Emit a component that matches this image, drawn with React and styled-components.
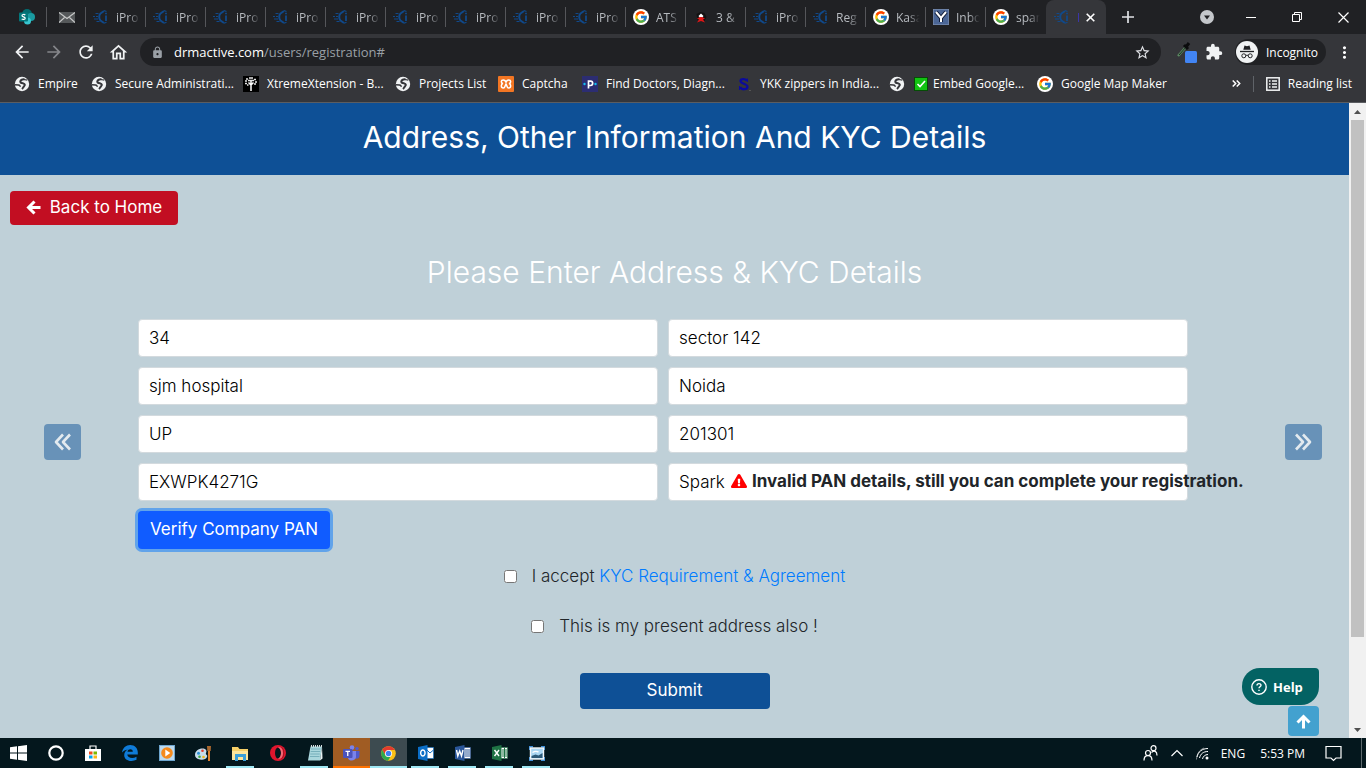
import React from "react";
import styled, { createGlobalStyle } from "styled-components";
import {
  MdArrowBack,
  MdArrowForward,
  MdRefresh,
  MdOutlineHome,
  MdLock,
  MdStarBorder,
  MdExtension,
  MdMoreVert,
} from "react-icons/md";
import { FcGoogle } from "react-icons/fc";
import { FaExclamationTriangle } from "react-icons/fa";

const GlobalStyle = createGlobalStyle`
  *, *::before, *::after { box-sizing: border-box; }
  body { margin: 0; background: #bfd0d8; font-family: Inter, sans-serif; color: #212529; }
  button, input { font: inherit; }
  button { border: 0; padding: 0; background: none; color: inherit; }
  svg { display: block; flex: none; }
`;

const chromeFont = `"Open Sans", "Noto Sans", sans-serif`;

const Screen = styled.div`
  display: flex;
  flex-direction: column;
  min-height: 100vh;
  overflow: hidden;
`;

/* ---------- Browser ---------- */

const Browser = styled.header`
  background: #35363a;
  color: #fff;
  font-family: ${chromeFont};
  font-size: 12px;
  border-bottom: 1px solid #5b5d61;
`;

const TabStrip = styled.div`
  display: flex;
  height: 34px;
  background: #202124;
`;

const PinnedTab = styled.button`
  display: flex;
  align-items: center;
  justify-content: center;
  width: ${(p) => p.$width}px;
  height: 34px;
  padding-left: ${(p) => p.$inset || 0}px;
  flex: none;
  background: linear-gradient(#55565a, #55565a) right center / 1px 20px no-repeat;
`;

const Tab = styled.button`
  display: flex;
  align-items: center;
  gap: 7px;
  flex: 0 1 60px;
  min-width: 0;
  height: 34px;
  padding: 0 2px 0 7px;
  overflow: hidden;
  background: ${(p) =>
    p.$last ? "none" : "linear-gradient(#55565a, #55565a) right center / 1px 20px no-repeat"};
`;

const ActiveTab = styled(Tab)`
  background: #35363a;
  border-radius: 8px 8px 0 0;
  padding: 0 11px 0 8px;
  justify-content: space-between;
`;

const TabTitle = styled.span`
  flex: 1;
  min-width: 0;
  overflow: hidden;
  white-space: nowrap;
  text-align: left;
  color: #b6babf;
  mask-image: linear-gradient(90deg, #000 45%, transparent 85%);
`;

const ActiveTitle = styled.span`
  width: 1px;
  height: 9px;
  background: #3b35a8;
`;

const NewTab = styled.button`
  width: 44px;
  height: 34px;
  display: grid;
  place-items: center;
`;

const WindowControls = styled.div`
  margin-left: auto;
  display: flex;
  align-items: center;
`;

const WindowButton = styled.button`
  width: ${(p) => p.$width || 46}px;
  height: 30px;
  display: grid;
  place-items: center;
`;

const Toolbar = styled.div`
  display: flex;
  align-items: center;
  height: 36px;
  padding: 0 12px;
`;

const ToolButton = styled.button`
  width: 32px;
  height: 32px;
  margin-left: ${(p) => (p.$first ? -6 : 0)}px;
  display: grid;
  place-items: center;
  color: ${(p) => (p.$dim ? "#85868a" : "#f1f3f4")};
`;

const AddressBar = styled.div`
  flex: 1;
  display: flex;
  align-items: center;
  gap: 10px;
  height: 28px;
  margin-left: 6px;
  padding: 0 10px 0 11px;
  border-radius: 14px;
  background: #202124;
  color: #9aa0a6;
`;

const Url = styled.span`
  flex: 1;
  white-space: nowrap;
  font-size: 13px;
  b { font-weight: 400; color: #fff; }
`;

const Extensions = styled.div`
  display: flex;
  align-items: center;
  gap: 8px;
  margin-left: 16px;
`;

const Incognito = styled.button`
  display: flex;
  align-items: center;
  gap: 8px;
  height: 26px;
  margin-left: 4px;
  padding: 0 8px 0 1px;
  border-radius: 13px;
  background: #202124;
  color: #fff;
`;

const MenuButton = styled.button`
  width: 20px;
  display: grid;
  place-items: center;
`;

const Bookmarks = styled.nav`
  display: flex;
  align-items: center;
  height: 32px;
  padding: 0 14px 5px;
`;

const Bookmark = styled.a`
  display: flex;
  align-items: center;
  gap: ${(p) => p.$gap || 8}px;
  flex: 0 0 ${(p) => p.$width}px;
  white-space: nowrap;
  color: #fff;
  text-decoration: none;
`;

const BookmarkEnd = styled.div`
  display: flex;
  align-items: center;
  gap: 12px;
  margin-left: auto;
`;

const Divider = styled.span`
  width: 1px;
  height: 16px;
  background: #5f6368;
`;

const ReadingList = styled.button`
  display: flex;
  align-items: center;
  gap: 8px;
  white-space: nowrap;
`;

const GoogleDisc = styled.span`
  display: grid;
  place-items: center;
  flex: none;
  width: 16px;
  height: 16px;
  border-radius: 50%;
  background: #fff;
`;

/* ---------- Page ---------- */

const Viewport = styled.div`
  flex: 1;
  display: flex;
`;

const Page = styled.main`
  position: relative;
  flex: 1;
  min-width: 0;
  background: #bfd0d8;
`;

const Banner = styled.h1`
  margin: 0;
  height: 72px;
  padding-bottom: 4px;
  display: flex;
  align-items: center;
  justify-content: center;
  background: #0e5096;
  color: #fff;
  font-size: 30px;
  font-weight: 400;
`;

const PageButton = styled.button`
  display: flex;
  align-items: center;
  justify-content: center;
  gap: 9px;
  padding-bottom: 2px;
  border-radius: 4px;
  color: #fff;
  font-size: 17px;
`;

const BackButton = styled(PageButton)`
  width: 168px;
  height: 34px;
  margin: 16px 10px 0;
  background: #c20e22;
`;

const Subtitle = styled.h2`
  margin: 29px 0;
  color: #fff;
  text-align: center;
  font-size: 30px;
  line-height: 36px;
  font-weight: 300;
`;

const Wizard = styled.div`
  display: flex;
  align-items: center;
  padding: 0 27px 0 44px;
`;

const StepButton = styled.button`
  display: grid;
  place-items: center;
  width: 37px;
  height: 36px;
  border-radius: 4px;
  background: #6892b8;
  color: #e3eaef;
`;

const Form = styled.form`
  flex: 1;
  display: grid;
  grid-template-columns: 1fr 1fr;
  gap: 10px;
  margin: 0 97px 0 57px;
  padding-bottom: 16px;
`;

const Field = styled.div`
  position: relative;
`;

const TextInput = styled.input`
  display: block;
  width: 100%;
  height: 38px;
  padding: 0 10px;
  border: 1px solid #d3dade;
  border-radius: 4px;
  background: #fff;
  color: #000;
  font-size: 17px;
  font-weight: 300;
`;

const PanError = styled.strong`
  position: absolute;
  left: 63px;
  top: 8px;
  display: flex;
  align-items: center;
  gap: 5px;
  white-space: nowrap;
  font-size: 17px;
  line-height: 20px;
  font-weight: 700;
  color: #212529;
  svg { color: #f00; }
`;

const VerifyButton = styled(PageButton)`
  justify-self: start;
  width: 192px;
  height: 38px;
  background: #105cff;
  box-shadow: 0 0 0 3px #61a3ea;
`;

const Consents = styled.div`
  margin-top: -14px;
`;

const Consent = styled.label`
  display: flex;
  align-items: center;
  justify-content: center;
  gap: 15px;
  height: 50px;
  font-size: 17px;
  font-weight: 300;
  a { color: #007bff; text-decoration: none; }
`;

const Checkbox = styled.input`
  width: 13px;
  height: 13px;
  margin: 0;
`;

const SubmitButton = styled(PageButton)`
  width: 190px;
  height: 36px;
  margin: 22px auto 28px;
  background: #0e5096;
`;

const FloatingTools = styled.div`
  position: absolute;
  right: 30px;
  bottom: 2px;
  display: flex;
  flex-direction: column;
  align-items: flex-end;
  gap: 1px;
`;

const HelpButton = styled.button`
  display: flex;
  align-items: center;
  gap: 6px;
  width: 77px;
  height: 37px;
  padding-left: 9px;
  border-radius: 18px 4px 18px 18px;
  background: #036263;
  color: #fff;
  font-family: ${chromeFont};
  font-size: 13px;
  font-weight: 700;
`;

const TopButton = styled.button`
  display: grid;
  place-items: center;
  width: 31px;
  height: 30px;
  border-radius: 4px;
  background: #43a1cf;
  color: #fff;
`;

const ScrollBar = styled.div`
  display: flex;
  flex-direction: column;
  width: 17px;
  background: #f1f1f1;
`;

const ScrollArrow = styled.span`
  height: 17px;
  display: grid;
  place-items: center;
  color: #505050;
`;

const ScrollTrack = styled.div`
  flex: 1;
  display: flex;
  flex-direction: column;
  padding: 0 2px;
  &::before { content: ""; flex: 517; background: #c1c1c1; }
  &::after { content: ""; flex: 84; }
`;

/* ---------- Taskbar ---------- */

const Taskbar = styled.footer`
  display: flex;
  height: 30px;
  background: #04171d;
  color: #fff;
  font-family: ${chromeFont};
  font-size: 12px;
`;

const taskBackground = { alert: "#a05c23", active: "#3d4b50" };

const taskUnderline = {
  open: "linear-gradient(90deg, transparent 4px, #9fe8f4 4px 32px, transparent 32px) 0 0 2 0",
  alert: "linear-gradient(#ff7200, #ff7200) 0 0 2 0",
  active: "linear-gradient(#9fe8f4, #9fe8f4) 0 0 2 0",
};

const TaskButton = styled.button`
  display: grid;
  place-items: center;
  width: 37px;
  height: 30px;
  background: ${(p) => taskBackground[p.$state] || "none"};
  border-top: 2px solid transparent;
  border-bottom: 2px solid transparent;
  border-image: ${(p) => taskUnderline[p.$state] || "none"};
`;

const Tray = styled.div`
  display: flex;
  align-items: center;
  gap: 12px;
  margin-left: auto;
  white-space: nowrap;
`;

const TrayEdge = styled.span`
  width: 1px;
  height: 30px;
  margin-right: 4px;
  margin-left: 7px;
  background: #5d696d;
`;

const Clock = styled.time`
  margin: 0 8px 0 3px;
`;

/* ---------- Drawings ---------- */

const SiteIcon = () => (
  <svg width="16" height="16" viewBox="0 0 16 16" fill="none" stroke="#10498a">
    <path d="M11 2L7.500 4.500C5.800 6 5.800 10 7.500 11.500L11 14" strokeWidth="2" />
    <path d="M11 1.500l2.500 1M11 14.200l2.500-1" strokeWidth="1.200" />
    <path d="M13 6.500V12M13 3.800v1.500" strokeWidth="1.800" />
    <path d="M2.500 4.500h3M0 7.500h2M3 7.500h2M1 10h4M3.500 12.500h3" strokeWidth="1.200" />
  </svg>
);

const SharepointIcon = () => (
  <svg width="16" height="16" viewBox="0 0 16 16">
    <circle cx="8" cy="5" r="5" fill="#036c70" />
    <circle cx="12" cy="8" r="4" fill="#1a9ba1" />
    <circle cx="8.500" cy="12" r="3.500" fill="#37c6d0" />
    <rect x="0" y="3.500" width="9" height="9" rx="1" fill="#03787c" />
    <path d="M6.300 6C5.500 5.200 3 5.200 3 6.700c0 1.400 3.200 1 3.200 2.500C6.200 10.700 3.500 10.600 2.700 9.800" fill="none" stroke="#fff" strokeWidth="1.200" />
  </svg>
);

const MailIcon = () => (
  <svg width="16" height="11" viewBox="0 0 16 11">
    <rect width="16" height="11" fill="#55585a" />
    <path d="M0 .5l8 6 8-6M0 10.500l5.500-5M16 10.500l-5.500-5" fill="none" stroke="#c9caca" strokeWidth="1.100" />
  </svg>
);

const RedFigureIcon = () => (
  <svg width="16" height="16" viewBox="0 0 16 16">
    <path d="M3.500 5l4-2 4 1 2 4-2 4-7-1z" fill="#111" />
    <path d="M8 4.500l2.500 2.500L9 9H7L5.500 7z" fill="#fff" />
    <path d="M4 9.500l3-1.500h2l3 1.500-2 1 2 3-4-1.500-4 1.500 2-3z" fill="#e01616" />
  </svg>
);

const YIcon = () => (
  <svg width="16" height="16" viewBox="0 0 16 16">
    <rect width="16" height="16" rx="1" fill="#4b6696" stroke="#8b9bb8" />
    <path d="M3 3l5 6 5-6M8 8.500V13" fill="none" stroke="#111c38" strokeWidth="4" />
    <path d="M3 3l5 6 5-6M8 8.500V13" fill="none" stroke="#fff" strokeWidth="2" />
  </svg>
);

const GIcon = () => (
  <GoogleDisc>
    <FcGoogle size={14} />
  </GoogleDisc>
);

const GlobeIcon = () => (
  <svg width="16" height="16" viewBox="0 0 16 16">
    <circle cx="8" cy="8" r="7.200" fill="#f1f3f4" />
    <path d="M10.500 3.500C8.500 3 6.500 4 6.300 5.500c-.1 1.600 1.500 1.700 3 1.900 1.700.3 1.900 1.800.9 2.700-.8.800-1 1.700-2.200 2.900" fill="none" stroke="#35363a" strokeWidth="2" />
    <path d="M1 8.800l3.500.2c1.200.2 1.800 1 1.500 1.800" fill="none" stroke="#35363a" strokeWidth="1.600" />
    <path d="M10 3.500l3.300.7" fill="none" stroke="#35363a" strokeWidth="1.200" />
  </svg>
);

const TreeIcon = () => (
  <svg width="16" height="16" viewBox="0 0 16 16">
    <rect width="16" height="16" fill="#000" />
    <path d="M8 15V9L5.500 6.500M8 9l2.500-2.500M8 8V4" fill="none" stroke="#fff" strokeWidth="1.500" />
    <path d="M2 5h2M3 3h2M6 2h4M11 3.500h2M12 6h2M2 7.500h2M5 4.500h6M11 8h2M4 9h1.500" stroke="#e6e6e6" strokeWidth="1.300" />
  </svg>
);

const XamppIcon = () => (
  <svg width="16" height="16" viewBox="0 0 16 16">
    <rect width="16" height="16" rx="1" fill="#f37623" />
    <path d="M8 6.500C7.500 4.500 6.500 4 5.300 4 2.800 4 2.700 7 5 7.600 2.700 8 2.800 12 5.300 12 7.300 12 6.800 9.500 8 8c1.200 1.500.7 4 2.700 4 2.500 0 2.600-4 .3-4.400C13.300 7 13.200 4 10.700 4 9.500 4 8.500 4.500 8 6.500z" fill="none" stroke="#fff" strokeWidth="1.500" />
  </svg>
);

const PractoIcon = () => (
  <svg width="16" height="16" viewBox="0 0 16 16">
    <rect width="16" height="16" fill="#2c2d72" />
    <path d="M6.500 12.500V5.200h2a2 2 0 0 1 0 4.300h-2" fill="none" stroke="#fff" strokeWidth="1.700" />
    <circle cx="2.500" cy="8" r="1.200" fill="#14bef0" />
    <circle cx="13.500" cy="8" r="1.200" fill="#14bef0" />
  </svg>
);

const NavySIcon = () => (
  <svg width="16" height="16" viewBox="0 0 16 16" fill="none" stroke="#0b0b9c">
    <path d="M11 5C10 2.500 4.500 2.500 4.500 5c0 2.700 7 2.800 7 5.800 0 3.200-6 3.200-7.300.2" strokeWidth="2.300" />
    <path d="M11.500 2.500v3.500M3.500 14v-4" strokeWidth="1" />
    <path d="M13 14.500h2" stroke="#555" strokeWidth="1" />
  </svg>
);

const CheckIcon = () => (
  <svg width="14" height="14" viewBox="0 0 14 14">
    <rect x=".5" y=".5" width="13" height="13" fill="#12c312" stroke="#064d06" />
    <path d="M3.500 7l2.500 2.500L11 4" fill="none" stroke="#fff" strokeWidth="1.600" />
  </svg>
);

const IncognitoIcon = () => (
  <svg width="22" height="22" viewBox="0 0 22 22">
    <circle cx="11" cy="11" r="11" fill="#f1f3f4" />
    <path d="M7.300 8.700l1.200-4.200 2.500.7 2.500-.7 1.200 4.200z" fill="#202124" />
    <path d="M4 10.500h14" stroke="#202124" strokeWidth="1.300" />
    <g fill="none" stroke="#202124" strokeWidth="1">
      <circle cx="7.800" cy="14.800" r="2" />
      <circle cx="14.200" cy="14.800" r="2" />
      <path d="M9.800 14.500q1.200-.8 2.400 0" />
    </g>
  </svg>
);

const PickerIcon = () => (
  <svg width="20" height="22" viewBox="0 0 20 22">
    <path d="M1 15l8-9" stroke="#5b8a62" strokeWidth="2.400" />
    <path d="M2 14l7-8" stroke="#1b2b20" strokeWidth="1" />
    <path d="M7 4l4 4M9 6l3-4" stroke="#0b0c0d" strokeWidth="3" />
    <rect x="8" y="10" width="12" height="12" rx="1.500" fill="#4285f4" />
  </svg>
);

const ListIcon = () => (
  <svg width="14" height="14" viewBox="0 0 14 14" fill="none" stroke="#f1f3f4">
    <rect x=".8" y=".8" width="12.400" height="12.400" strokeWidth="1.500" />
    <path d="M3 4h1.500M6 4h5M3 7h1.500M6 7h5M3 10h1.500M6 10h5" strokeWidth="1.500" />
  </svg>
);

const HeavyArrow = ({ up }) => (
  <svg width="15" height="15" viewBox="0 0 15 15" fill="none" stroke="currentColor" strokeWidth="3">
    <path d={up ? "M1.500 8.500l6-6 6 6M7.500 3v11.500" : "M8.500 1.500l-6 6 6 6M3 7.500h11.500"} />
  </svg>
);

const DoubleChevron = ({ right }) => (
  <svg width="19" height="18" viewBox="0 0 19 18" fill="none" stroke="currentColor" strokeWidth="2.600" strokeLinejoin="round">
    <path d={right ? "M2 1.500L9 9l-7 7.500M9 1.500L16 9l-7 7.500" : "M10 1.500L3 9l7 7.500M17 1.500L10 9l7 7.500"} />
  </svg>
);

const HelpIcon = () => (
  <svg width="16" height="16" viewBox="0 0 16 16" fill="none" stroke="#fff" strokeWidth="1.400">
    <circle cx="8" cy="8" r="7.200" />
    <path d="M6 6.500C6 4 10 4 10 6.300c0 1.500-2 1.500-2 3" />
    <path d="M8 10.800v1.300" />
  </svg>
);

const Triangle = ({ down }) => (
  <svg width="7" height="4" viewBox="0 0 7 4" fill="currentColor">
    <path d={down ? "M0 0h7L3.500 4z" : "M0 4h7L3.500 0z"} />
  </svg>
);

const OfficeIcon = ({ color, mark, children }) => (
  <svg width="16" height="16" viewBox="0 0 16 16">
    <rect x="8" y="2.500" width="7.500" height="11" fill="#fff" stroke={color} strokeWidth=".6" />
    {children}
    <path d="M0 2l9.500-2v16L0 14z" fill={color} />
    <path d={mark} fill="none" stroke="#fff" strokeWidth="1.400" />
  </svg>
);

const taskIcons = {
  Start: (
    <svg width="17" height="16" viewBox="0 0 17 16" fill="#fff">
      <path d="M0 2.300l7-1v6.200H0zM8 1.200L17 0v7.500H8zM0 8.500h7v6.200l-7-1zM8 8.500h9V16l-9-1.200z" />
    </svg>
  ),
  Search: (
    <svg width="16" height="16" viewBox="0 0 16 16">
      <circle cx="8" cy="8" r="6.700" fill="none" stroke="#fff" strokeWidth="2.200" />
    </svg>
  ),
  Store: (
    <svg width="16" height="16" viewBox="0 0 16 16">
      <path d="M5 4V1h6v3" fill="none" stroke="#fff" strokeWidth="1.200" />
      <path d="M0 4h16v12H0z" fill="#fff" />
      <path d="M4 6.500h3.500v3H4z" fill="#f04e1f" />
      <path d="M8.500 6.500H12v3H8.500z" fill="#7cb900" />
      <path d="M4 10.500h3.500v3H4z" fill="#00a3ee" />
      <path d="M8.500 10.500H12v3H8.500z" fill="#fcb714" />
    </svg>
  ),
  Edge: (
    <svg width="16" height="16" viewBox="0 0 16 16">
      <path d="M0 7.500C.5 3 4 0 8.200 0 13 0 15.800 3.500 15.800 7.500v2H5.300c.2 3.500 5.200 4.500 9.200 2.300v3C9.500 17.300 2.200 16 2.200 10c0-2.500 1.500-4.500 3.500-5.500C3.500 5 1.300 5.800 0 7.500zm5.500-.8h5.300C10.800 3.500 6 3.500 5.500 6.700z" fill="#0f7bd8" />
    </svg>
  ),
  "Media player": (
    <svg width="16" height="16" viewBox="0 0 16 16">
      <rect x=".5" y=".5" width="15" height="15" fill="#bcd9ee" stroke="#6ea6cf" />
      <circle cx="8" cy="8" r="5.800" fill="#f58a1c" />
      <path d="M6.300 4.500v7l5-3.500z" fill="#fff" />
    </svg>
  ),
  Paint: (
    <svg width="17" height="16" viewBox="0 0 17 16">
      <path d="M0 10c0-4 3.500-6.500 7.500-6.500s4.500 2.500 3.500 4.500 2 1.500 1 4-4 3-7 2.500-5-2-5-4.500z" fill="#c7dcea" />
      <circle cx="3.500" cy="8.300" r="1.500" fill="#2c8fd6" />
      <circle cx="7.500" cy="5.800" r="1.300" fill="#e23c2e" />
      <circle cx="4.500" cy="11.800" r="1.300" fill="#3da845" />
      <circle cx="8.500" cy="12" r="1.300" fill="#f1b61b" />
      <path d="M14 16V6" stroke="#e0802c" strokeWidth="2" />
      <path d="M12.300 6L12 1h4l-.3 5z" fill="#a8672f" />
    </svg>
  ),
  "File Explorer": (
    <svg width="17" height="15" viewBox="0 0 17 15">
      <path d="M0 1h6l1.500 2H16v11H0z" fill="#f6d068" />
      <path d="M0 5h16v9H0z" fill="#fde59b" />
      <path d="M3 8h11v7h-3v-4H6v4H3z" fill="#3b9fd8" />
    </svg>
  ),
  Opera: (
    <svg width="16" height="16" viewBox="0 0 16 16">
      <circle cx="8" cy="8" r="8" fill="#e0152d" />
      <path d="M9 .5A8 8 0 0 1 9 15.500c6-2 6-13 0-15z" fill="#8f0f1e" />
      <ellipse cx="8" cy="8" rx="3" ry="5.500" fill="#04171d" />
      <path d="M8 2.500C10 1.500 13 3 13 8s-3 6.500-5 5.500c4-1 4-10 0-11z" fill="#f26a75" />
    </svg>
  ),
  Notepad: (
    <svg width="16" height="16" viewBox="0 0 16 16">
      <path d="M3.500 1.500H15L13 15.500H1z" fill="#a9d6dc" />
      <path d="M15 1.500l.5 12-2.500 2z" fill="#e9f3f4" />
      <path d="M4 4h9.500M3.700 6.500h9.500M3.300 9h9.500M3 11.500h9.500" stroke="#6ba6b3" strokeWidth=".8" />
      <path d="M4 1h11" stroke="#d6dddf" strokeWidth="2" strokeDasharray="1 1" />
    </svg>
  ),
  Teams: (
    <svg width="17" height="16" viewBox="0 0 17 16">
      <circle cx="9" cy="2.600" r="2.300" fill="#7b83eb" />
      <circle cx="14" cy="3.600" r="1.700" fill="#5059c9" />
      <path d="M11 6h5.500v5c0 2-2 3-4 2.500z" fill="#5059c9" />
      <path d="M5 6h8v6c0 4-7 5-8 1z" fill="#7b83eb" />
      <rect x="0" y="4" width="9.500" height="9" rx="1" fill="#4b53bc" />
      <path d="M2.500 6.300H7M4.750 6.300V11" stroke="#fff" strokeWidth="1.300" />
    </svg>
  ),
  Chrome: (
    <svg width="15" height="15" viewBox="0 0 15 15">
      <circle cx="7.500" cy="7.500" r="7.300" fill="#fbc116" />
      <path d="M1.200 3.800A7.300 7.300 0 0 1 13.900 4H7.500L4.500 9.200z" fill="#e33b2e" />
      <path d="M1.200 3.800l3.200 5.500 3.100 1.700h1.900l-2.500 3.800A7.300 7.300 0 0 1 1.200 3.800z" fill="#2da94f" />
      <circle cx="7.500" cy="7.500" r="3.500" fill="#fff" />
      <circle cx="7.500" cy="7.500" r="2.700" fill="#3e82f1" />
    </svg>
  ),
  Outlook: (
    <OfficeIcon color="#0a6ec6" mark="M4.800 5a2.200 3 0 1 0 .1 0z">
      <path d="M9 5l3 3 3.500-3" fill="none" stroke="#0a6ec6" />
    </OfficeIcon>
  ),
  Word: (
    <OfficeIcon color="#2a5699" mark="M1.500 5l1.300 6L4.700 6l1.800 5L8 5">
      <path d="M10 5h5M10 7h5M10 9h5M10 11h5" stroke="#2a5699" />
    </OfficeIcon>
  ),
  Excel: (
    <OfficeIcon color="#1f7345" mark="M2.500 5l4.500 6M7 5l-4.500 6">
      <path d="M10 5h5M10 7h5M10 9h5M10 11h5M12.500 3v10" stroke="#1f7345" />
    </OfficeIcon>
  ),
  Snapshot: (
    <svg width="16" height="15" viewBox="0 0 16 15">
      <path d="M0 0h4M0 0v4M16 0h-4M16 0v4M0 15h4M0 15v-4M16 15h-4M16 15v-4" stroke="#3e8fd8" strokeWidth="3" />
      <rect x="1.500" y="2" width="13" height="11" fill="#a9d6f2" stroke="#f4f8fa" strokeWidth="1.400" />
      <path d="M2.500 12v-2l4-1.500 3 1 4-2.500v5z" fill="#2d5a78" />
      <path d="M3.500 6.500q3-2 6-.5" stroke="#fff" strokeWidth="1.400" fill="none" />
    </svg>
  ),
};

/* ---------- Data ---------- */

const tabs = [
  ...Array.from({ length: 9 }, () => [SiteIcon, "iPro"]),
  [GIcon, "ATS"],
  [RedFigureIcon, "3 &"],
  [SiteIcon, "iPro"],
  [SiteIcon, "Reg"],
  [GIcon, "Kasa"],
  [YIcon, "Inbo"],
  [GIcon, "spar"],
];

const bookmarks = [
  [GlobeIcon, "Empire", 77],
  [GlobeIcon, "Secure Administrati...", 152],
  [TreeIcon, "XtremeXtension - B...", 152],
  [GlobeIcon, "Projects List", 103],
  [XamppIcon, "Captcha", 84],
  [PractoIcon, "Find Doctors, Diagn...", 154],
  [NavySIcon, "YKK zippers in India...", 153],
  [GlobeIcon, "", 25],
  [CheckIcon, "Embed Google...", 123, 5],
  [GIcon, "Google Map Maker", 130],
];

const fields = [
  ["House number", "34"],
  ["Street", "sector 142"],
  ["Landmark", "sjm hospital"],
  ["City", "Noida"],
  ["State", "UP"],
  ["Pin code", "201301"],
  ["PAN number", "EXWPK4271G"],
];

const tasks = [
  ["Start"],
  ["Search"],
  ["Store"],
  ["Edge"],
  ["Media player"],
  ["Paint"],
  ["File Explorer", "open"],
  ["Opera"],
  ["Notepad", "open"],
  ["Teams", "alert"],
  ["Chrome", "active"],
  ["Outlook", "open"],
  ["Word", "open"],
  ["Excel", "open"],
  ["Snapshot", "open"],
];

/* ---------- Sections ---------- */

function BrowserChrome() {
  return (
    <Browser>
      <TabStrip>
        <PinnedTab $width={47} $inset={7} aria-label="SharePoint">
          <SharepointIcon />
        </PinnedTab>
        <PinnedTab $width={39} aria-label="Mail">
          <MailIcon />
        </PinnedTab>
        {tabs.map(([Icon, title], i) => (
          <Tab key={i} $last={i === tabs.length - 1}>
            <Icon />
            <TabTitle>{title}</TabTitle>
          </Tab>
        ))}
        <ActiveTab aria-label="Registration">
          <SiteIcon />
          <ActiveTitle />
          <svg width="9" height="9" viewBox="0 0 9 9" stroke="#fff" strokeWidth="1.600">
            <path d="M.7.7l7.600 7.600M8.300.7L.7 8.300" />
          </svg>
        </ActiveTab>
        <NewTab aria-label="New tab">
          <svg width="12" height="12" viewBox="0 0 12 12" stroke="#dfe1e5" strokeWidth="1.700">
            <path d="M6 0v12M0 6h12" />
          </svg>
        </NewTab>
        <WindowControls>
          <WindowButton $width={42} aria-label="Search tabs">
            <svg width="14" height="14" viewBox="0 0 14 14">
              <circle cx="7" cy="7" r="7" fill="#c4c7cb" />
              <path d="M4 5.500h6L7 9.500z" fill="#202124" />
            </svg>
          </WindowButton>
          <WindowButton aria-label="Minimize">
            <svg width="10" height="1" viewBox="0 0 10 1">
              <path d="M0 .5h10" stroke="#fff" />
            </svg>
          </WindowButton>
          <WindowButton aria-label="Restore">
            <svg width="10" height="10" viewBox="0 0 10 10" fill="none" stroke="#fff">
              <path d="M.5 2.500h7v7h-7zM2.500 2.500v-2h7v7h-2" />
            </svg>
          </WindowButton>
          <WindowButton aria-label="Close">
            <svg width="11" height="11" viewBox="0 0 11 11" stroke="#fff" strokeWidth="1.200">
              <path d="M.5.5l10 10M10.500.5l-10 10" />
            </svg>
          </WindowButton>
        </WindowControls>
      </TabStrip>
      <Toolbar>
        <ToolButton $first aria-label="Back"><MdArrowBack size={20} /></ToolButton>
        <ToolButton $dim aria-label="Forward"><MdArrowForward size={20} /></ToolButton>
        <ToolButton aria-label="Reload"><MdRefresh size={20} /></ToolButton>
        <ToolButton aria-label="Home"><MdOutlineHome size={21} /></ToolButton>
        <AddressBar>
          <MdLock size={13} />
          <Url><b>drmactive.com</b>/users/registration#</Url>
          <MdStarBorder size={17} color="#dfe1e5" />
        </AddressBar>
        <Extensions>
          <PickerIcon />
          <MdExtension size={18} color="#f1f3f4" />
          <Incognito>
            <IncognitoIcon />
            Incognito
          </Incognito>
          <MenuButton aria-label="Menu"><MdMoreVert size={19} /></MenuButton>
        </Extensions>
      </Toolbar>
      <Bookmarks>
        {bookmarks.map(([Icon, label, width, gap]) => (
          <Bookmark key={label} href="#" $width={width} $gap={gap} aria-label={label || "Site"}>
            <Icon />
            {label}
          </Bookmark>
        ))}
        <BookmarkEnd>
          <svg width="9" height="7" viewBox="0 0 9 7" fill="none" stroke="#fff" strokeWidth="1.500">
            <path d="M.7.5l3 3-3 3M4.700.5l3 3-3 3" />
          </svg>
          <Divider />
          <ReadingList>
            <ListIcon />
            Reading list
          </ReadingList>
        </BookmarkEnd>
      </Bookmarks>
    </Browser>
  );
}

function Registration() {
  return (
    <Page>
      <Banner>Address, Other Information And KYC Details</Banner>
      <BackButton>
        <HeavyArrow />
        Back to Home
      </BackButton>
      <Subtitle>Please Enter Address &amp; KYC Details</Subtitle>
      <Wizard>
        <StepButton aria-label="Previous step"><DoubleChevron /></StepButton>
        <Form>
          {fields.map(([label, value]) => (
            <Field key={label}>
              <TextInput aria-label={label} defaultValue={value} />
            </Field>
          ))}
          <Field>
            <TextInput aria-label="Company name" defaultValue="Spark" />
            <PanError>
              <FaExclamationTriangle size={16} />
              Invalid PAN details, still you can complete your registration.
            </PanError>
          </Field>
          <VerifyButton type="button">Verify Company PAN</VerifyButton>
        </Form>
        <StepButton aria-label="Next step"><DoubleChevron right /></StepButton>
      </Wizard>
      <Consents>
        <Consent>
          <Checkbox type="checkbox" />
          <span>I accept <a href="#">KYC Requirement &amp; Agreement</a></span>
        </Consent>
        <Consent>
          <Checkbox type="checkbox" />
          <span>This is my present address also !</span>
        </Consent>
      </Consents>
      <SubmitButton>Submit</SubmitButton>
      <FloatingTools>
        <HelpButton><HelpIcon />Help</HelpButton>
        <TopButton aria-label="Back to top"><HeavyArrow up /></TopButton>
      </FloatingTools>
    </Page>
  );
}

function WindowsTaskbar() {
  return (
    <Taskbar>
      {tasks.map(([name, state]) => (
        <TaskButton key={name} $state={state} aria-label={name}>
          {taskIcons[name]}
        </TaskButton>
      ))}
      <Tray>
        <svg width="15" height="16" viewBox="0 0 15 16" fill="none" stroke="#fff" strokeWidth="1.200">
          <circle cx="5" cy="8" r="2.500" />
          <path d="M1 15.500c0-6.500 8-6.500 8 0" />
          <circle cx="10.500" cy="3.200" r="2.500" />
          <path d="M8.500 7.500c3-3 5.500-1 5.500 3" />
        </svg>
        <svg width="14" height="8" viewBox="0 0 14 8" fill="none" stroke="#fff" strokeWidth="1.200">
          <path d="M1.500 7L7 1.500 12.500 7" />
        </svg>
        <svg width="13" height="13" viewBox="0 0 13 13" fill="none" stroke="#fff">
          <path d="M1 10C2 5 6 1.500 12 1.500M3.500 11C4.500 7 7 4.500 12 4.500M6.500 12C7 9.500 9 7.500 12 7.500" />
          <circle cx="11" cy="11" r="1.500" fill="#fff" stroke="none" />
          <path d="M.5 12.500C1 7 3 3 8 1" opacity=".5" />
        </svg>
        <span>ENG</span>
        <Clock>5:53 PM</Clock>
        <svg width="17" height="17" viewBox="0 0 17 17" fill="none" stroke="#fff" strokeWidth="1.200">
          <path d="M1 1.500h15v11.500h-5L8.500 15.500 6 13H1z" />
        </svg>
        <TrayEdge />
      </Tray>
    </Taskbar>
  );
}

export default function App() {
  return (
    <Screen>
      <GlobalStyle />
      <BrowserChrome />
      <Viewport>
        <Registration />
        <ScrollBar>
          <ScrollArrow><Triangle /></ScrollArrow>
          <ScrollTrack />
          <ScrollArrow><Triangle down /></ScrollArrow>
        </ScrollBar>
      </Viewport>
      <WindowsTaskbar />
    </Screen>
  );
}
